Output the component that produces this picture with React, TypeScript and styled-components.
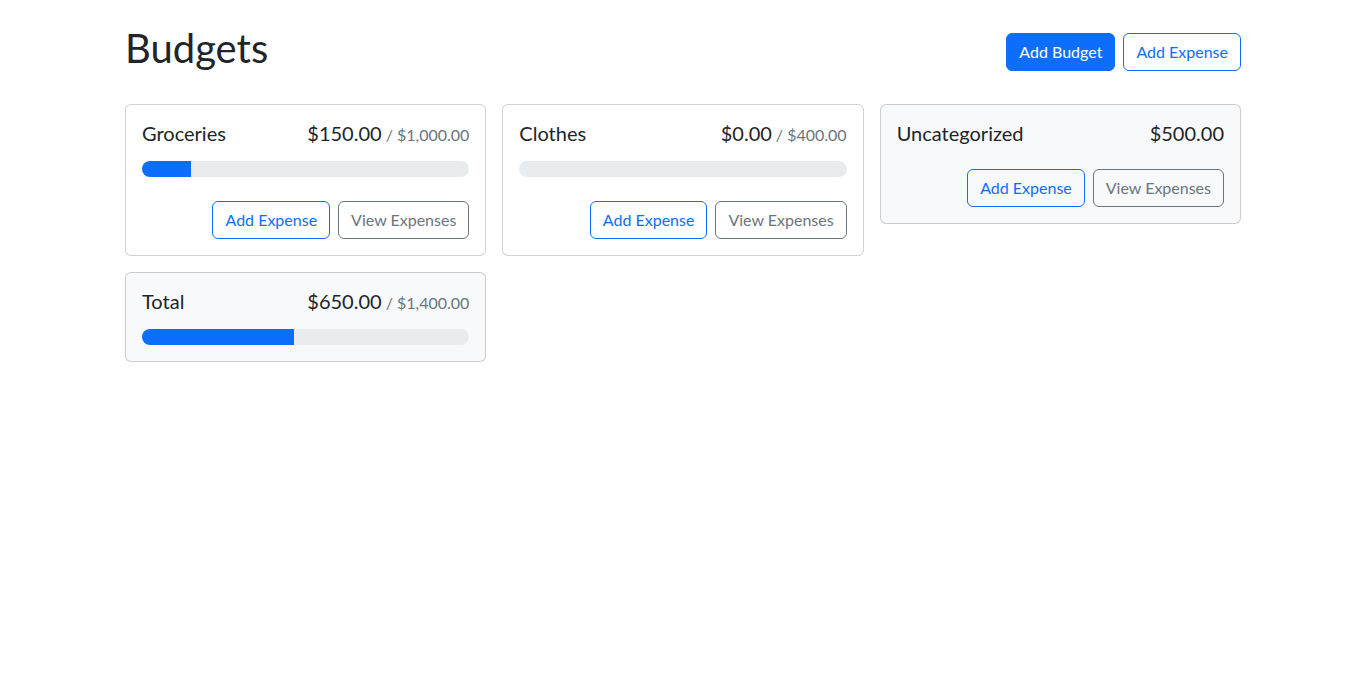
import React from "react";
import styled, { createGlobalStyle } from "styled-components";

// Budget overview page (cards with progress bars)

const GlobalStyle = createGlobalStyle`
  *, *::before, *::after {
    box-sizing: border-box;
  }
  body {
    margin: 0;
    font-family: Lato, "Noto Sans", "Liberation Sans", Arial, sans-serif;
    font-size: 16px;
    line-height: 1.5;
    color: #212529;
    background-color: #fff;
  }
`;

type Budget = {
  name: string;
  amount: number;
  max?: number;
  gray?: boolean;
  hideButtons?: boolean;
};

const budgets: Budget[] = [
  { name: "Groceries", amount: 150, max: 1000 },
  { name: "Clothes", amount: 0, max: 400 },
  { name: "Uncategorized", amount: 500, gray: true },
  { name: "Total", amount: 650, max: 1400, gray: true, hideButtons: true },
];

const currency = (n: number) =>
  "$" +
  n.toLocaleString("en-US", {
    minimumFractionDigits: 2,
    maximumFractionDigits: 2,
  });

const barColor = (ratio: number) => {
  if (ratio < 0.5) return "#0d6efd";
  if (ratio < 0.75) return "#ffc107";
  return "#dc3545";
};

function BudgetCard({ name, amount, max, gray, hideButtons }: Budget) {
  const ratio = max ? amount / max : 0;
  return (
    <Card $gray={gray}>
      <CardBody>
        <CardTitle>
          <div className="name">{name}</div>
          <div className="amount">
            {currency(amount)}
            {max !== undefined && <small>/ {currency(max)}</small>}
          </div>
        </CardTitle>
        {max !== undefined && (
          <Progress>
            {amount > 0 && (
              <ProgressBar
                $color={barColor(ratio)}
                style={{ width: `${ratio * 100}%` }}
              />
            )}
          </Progress>
        )}
        {!hideButtons && (
          <ButtonRow>
            <Button $variant="outline-primary" className="first">
              Add Expense
            </Button>
            <Button $variant="outline-secondary">View Expenses</Button>
          </ButtonRow>
        )}
      </CardBody>
    </Card>
  );
}

export default function App() {
  return (
    <>
      <GlobalStyle />
      <Container>
        <Header>
          <h1>Budgets</h1>
          <Button $variant="primary">Add Budget</Button>
          <Button $variant="outline-primary">Add Expense</Button>
        </Header>
        <CardGrid>
          {budgets.map((b) => (
            <BudgetCard key={b.name} {...b} />
          ))}
        </CardGrid>
      </Container>
    </>
  );
}

const Container = styled.div`
  max-width: 1140px;
  margin: 24px auto;
  padding: 0 12px;
`;

const Header = styled.div`
  display: flex;
  align-items: center;
  gap: 8px;
  margin-bottom: 24px;

  h1 {
    margin: 0 auto 8px 0;
    font-size: 40px;
    font-weight: 400;
    line-height: 1.2;
  }
`;

const Button = styled.button<{ $variant: string }>`
  display: inline-block;
  padding: 6px 12px;
  font-family: inherit;
  font-size: 16px;
  font-weight: 400;
  line-height: 1.5;
  border-radius: 6px;
  cursor: pointer;
  background-color: ${(p) => (p.$variant === "primary" ? "#0d6efd" : "transparent")};
  color: ${(p) =>
    p.$variant === "primary"
      ? "#fff"
      : p.$variant === "outline-primary"
      ? "#0d6efd"
      : "#6c757d"};
  border: 1px solid
    ${(p) => (p.$variant === "outline-secondary" ? "#6c757d" : "#0d6efd")};
`;

const CardGrid = styled.div`
  display: grid;
  grid-template-columns: repeat(auto-fill, minmax(300px, 1fr));
  gap: 16px;
  align-items: flex-start;
`;

const Card = styled.div<{ $gray?: boolean }>`
  background-color: ${(p) => (p.$gray ? "#f8f9fa" : "#fff")};
  border: 1px solid rgba(0, 0, 0, 0.175);
  border-radius: 6px;
`;

const CardBody = styled.div`
  padding: 16px;
`;

const CardTitle = styled.div`
  display: flex;
  justify-content: space-between;
  align-items: baseline;
  margin-bottom: 16px;
  font-size: 20px;
  line-height: 1.2;

  .name {
    margin-right: 8px;
  }

  .amount {
    display: flex;
    align-items: baseline;
  }

  small {
    margin-left: 4px;
    font-size: 16px;
    color: #6c757d;
  }
`;

const Progress = styled.div`
  display: flex;
  height: 16px;
  overflow: hidden;
  background-color: #e9ecef;
  border-radius: 50rem;
`;

const ProgressBar = styled.div<{ $color: string }>`
  height: 100%;
  background-color: ${(p) => p.$color};
`;

const ButtonRow = styled.div`
  display: flex;
  align-items: center;
  gap: 8px;
  margin-top: 24px;

  .first {
    margin-left: auto;
  }
`;
